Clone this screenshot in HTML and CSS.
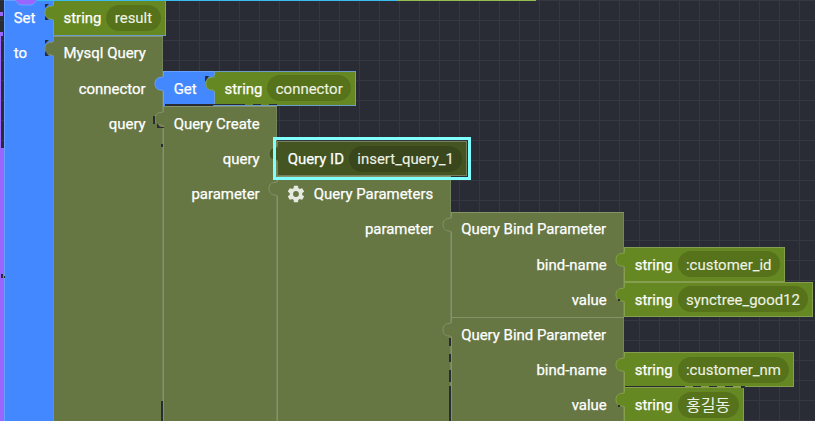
FILE: index.html
```
<!DOCTYPE html>
<html lang="ko">
<head>
<meta charset="utf-8">
<title>Block workspace</title>
<link rel="stylesheet" href="styles.css">
</head>
<body>
<svg class="defs" width="0" height="0" aria-hidden="true">
  <symbol id="tab" viewBox="0 0 11 18"><path class="tab-fill" d="M11 .5H9.5V17H11Z"/><path class="tab-line" d="M9.5 .5C9.5 2 8.5 2.4 7 2.4C3.5 2.4 1 4.6 1 8.7S3.5 15 7 15C8.5 15 9.5 15.5 9.5 17"/><path class="tab-fill" d="M8.8 2.8H10.5V14.8H8.8Z"/></symbol>
</svg>
<main class="canvas">
  <div class="parent-block"></div>
  <div class="block set">
    <div class="row"><span class="label first">Set</span>
      <div class="block text linked"><svg class="tab"><use href="#tab"/></svg><div class="row"><span class="label">string</span><span class="pill">result</span></div></div>
    </div>
    <div class="row"><span class="label first">to</span>
      <div class="block olive mysql"><svg class="tab"><use href="#tab"/></svg>
        <div class="row"><span class="label first">Mysql Query</span></div>
        <div class="row"><span class="label">connector</span>
          <div class="block get"><svg class="tab"><use href="#tab"/></svg><div class="row"><span class="label first">Get</span>
            <div class="block text linked"><svg class="tab"><use href="#tab"/></svg><div class="row"><span class="label">string</span><span class="pill">connector</span></div></div>
          </div></div>
        </div>
        <div class="row"><span class="label">query</span>
          <div class="block olive create"><svg class="tab"><use href="#tab"/></svg>
            <div class="row"><span class="label first">Query Create</span></div>
            <div class="row"><span class="label">query</span>
              <div class="block text selected"><svg class="tab"><use href="#tab"/></svg><div class="row"><span class="label">Query ID</span><span class="pill">insert_query_1</span></div></div>
            </div>
            <div class="row"><span class="label">parameter</span>
              <div class="block olive params"><svg class="tab"><use href="#tab"/></svg>
                <div class="row"><span class="label first"><svg class="gear" viewBox="0 0 24 24"><path d="M19.43 12.98c.04-.32.07-.64.07-.98s-.03-.66-.07-.98l2.11-1.65c.19-.15.24-.42.12-.64l-2-3.46c-.12-.22-.39-.3-.61-.22l-2.49 1c-.52-.4-1.08-.73-1.69-.98l-.38-2.65A.49.49 0 0 0 14 2h-4c-.25 0-.46.18-.49.42l-.38 2.65c-.61.25-1.17.59-1.69.98l-2.49-1c-.23-.09-.49 0-.61.22l-2 3.46c-.13.22-.07.49.12.64l2.11 1.65c-.04.32-.07.65-.07.98s.03.66.07.98l-2.11 1.65c-.19.15-.24.42-.12.64l2 3.46c.12.22.39.3.61.22l2.49-1c.52.4 1.08.73 1.69.98l.38 2.65c.03.24.24.42.49.42h4c.25 0 .46-.18.49-.42l.38-2.65c.61-.25 1.17-.59 1.69-.98l2.49 1c.23.09.49 0 .61-.22l2-3.46c.12-.22.07-.49-.12-.64zM12 15.5a3.5 3.5 0 1 1 0-7 3.5 3.5 0 0 1 0 7z"/></svg>Query Parameters</span></div>
                <div class="row"><span class="label">parameter</span>
                  <div class="stack">
                    <div class="block olive bind"><svg class="tab"><use href="#tab"/></svg>
                      <div class="row"><span class="label first">Query Bind Parameter</span></div>
                      <div class="row"><span class="label">bind-name</span>
                        <div class="block text"><svg class="tab"><use href="#tab"/></svg><div class="row"><span class="label">string</span><span class="pill">:customer_id</span></div></div>
                      </div>
                      <div class="row"><span class="label">value</span>
                        <div class="block text"><svg class="tab"><use href="#tab"/></svg><div class="row"><span class="label">string</span><span class="pill">synctree_good12</span></div></div>
                      </div>
                    </div>
                    <div class="block olive bind"><svg class="tab"><use href="#tab"/></svg>
                      <div class="row"><span class="label first">Query Bind Parameter</span></div>
                      <div class="row"><span class="label">bind-name</span>
                        <div class="block text"><svg class="tab"><use href="#tab"/></svg><div class="row"><span class="label">string</span><span class="pill">:customer_nm</span></div></div>
                      </div>
                      <div class="row"><span class="label">value</span>
                        <div class="block text"><svg class="tab"><use href="#tab"/></svg><div class="row"><span class="label">string</span><span class="pill hangul">홍길동</span></div></div>
                      </div>
                    </div>
                  </div>
                </div>
              </div>
            </div>
          </div>
        </div>
      </div>
    </div>
  </div>
  <svg class="overlay" viewBox="0 0 815 421">
    <path fill="#9966ff" d="M0 12h3v4H0zM0 32h3v4H0zM0 36h1v112H0z"/>
    <path fill="#9966ff" stroke="#69a0ff" d="M14 0C17 0 17 5 21 5h10C35 5 35 0 38 0"/>
    <path fill="#3bbcf0" d="M38 0h359v1H38z"/>
    <path fill="#98bb50" d="M397 0h139v1H397z"/>
    <path fill="#2a2c35" d="M45 4h4l-4 4zM45 16l4 4h-4zM45 40h4l-4 4zM45 51l4 5h-4zM205 76h4l-4 6zM153 116h2v8h-2zM157 123l3 4h4v1h-7zM618 299h2v2h-2zM618 405h2v2h-2zM165 104h48v2h-48zM213 104h32v1h-32zM253 104h8v1h-8zM269 104h8v1h-8zM161 144h2v3h-2zM161 401h2v20h-2zM449 338h2v8h-2zM449 354h2v8h-2zM449 370h2v12h-2zM449 386h2v35h-2zM625 386h60v1h-60zM693 386h8v1h-8zM709 386h8v1h-8zM725 386h8v1h-8zM741 386h4v2h-4zM1 274h2v4H1zM4 276h1v2H4z"/>
  </svg>
</main>
</body>
</html>
```
FILE: styles.css
```
* { box-sizing: border-box; }
body { margin: 0; overflow: hidden; background: #2a2c35; }
.defs { position: absolute; }
.canvas {
  position: relative;
  width: 815px;
  height: 421px;
  overflow: hidden;
  padding: .4px 0 0 3.5px;
  font: 400 14.95px/1 Roboto, "Noto Sans CJK KR", sans-serif;
  color: #fff;
  background-color: #2a2c35;
  background-image: linear-gradient(#363841 1px, transparent 1px), linear-gradient(90deg, #363841 1px, transparent 1px);
  background-size: 20px 20px;
  background-position: 19px 0;
}
.parent-block { position: absolute; left: 0; top: 148px; width: 4px; height: 273px; background: #9966ff; }
.block {
  --fill: #667744;
  --line: #859369;
  position: relative;
  flex: none;
  width: var(--w);
  background: var(--fill);
  box-shadow: inset 1px 1px var(--line);
}
.row { display: flex; min-height: 35.2px; align-items: flex-start; }
.row > .label { flex: none; width: var(--w); height: 35.2px; padding: 1.4px 17.8px 0 10.2px; display: flex; align-items: center; justify-content: flex-end; white-space: nowrap; -webkit-text-stroke: .25px #fff; }
.row > .label.first { justify-content: flex-start; }
.set { --w: 49.8px; }
.set, .get { --fill: #4488ff; --line: #69a0ff; }
.mysql { --w: 110.2px; }
.get { --w: 50.8px; }
.create { --w: 114px; }
.params { --w: 173.5px; }
.bind { --w: 173.5px; }
.mysql, .create, .params, .bind { box-shadow: inset 1px 1px var(--line), inset -1px 0 #75855a; }
.text { --fill: #668822; --line: #859f4e; --pill: #56731c; width: auto; box-shadow: inset 0 0 0 1px var(--line); }
.text.linked { box-shadow: inset 0 0 0 1px #6b9ccc; }
.text > .row { align-items: center; padding-right: 4.9px; }
.text > .row > .label { width: auto; padding: 1.4px 4.9px 0 10.2px; }
.pill { height: 26px; padding: 1.4px 8.5px 0; border-radius: 13px; display: flex; align-items: center; background: var(--pill); color: #eef2e4; white-space: nowrap; -webkit-text-stroke: .12px #eef2e4; }
.pill.hangul { font-size: 16px; -webkit-text-stroke: 0; }
.text.selected { --fill: #445522; --line: #777f60; --pill: #3a471d; z-index: 1; }
.text.selected::after { content: ""; position: absolute; inset: -4px; border: 3px solid #80ffff; }
.tab { position: absolute; left: -9.2px; top: 4px; width: 11px; height: 18px; }
.tab-fill { fill: var(--fill); }
.tab-line { fill: var(--fill); stroke: var(--line); }
.gear { width: 20px; height: 20px; margin: -1px 7.8px 0 -1.6px; fill: #e6e9df; }
.overlay { position: absolute; left: 0; top: 0; width: 815px; height: 421px; pointer-events: none; }
```
